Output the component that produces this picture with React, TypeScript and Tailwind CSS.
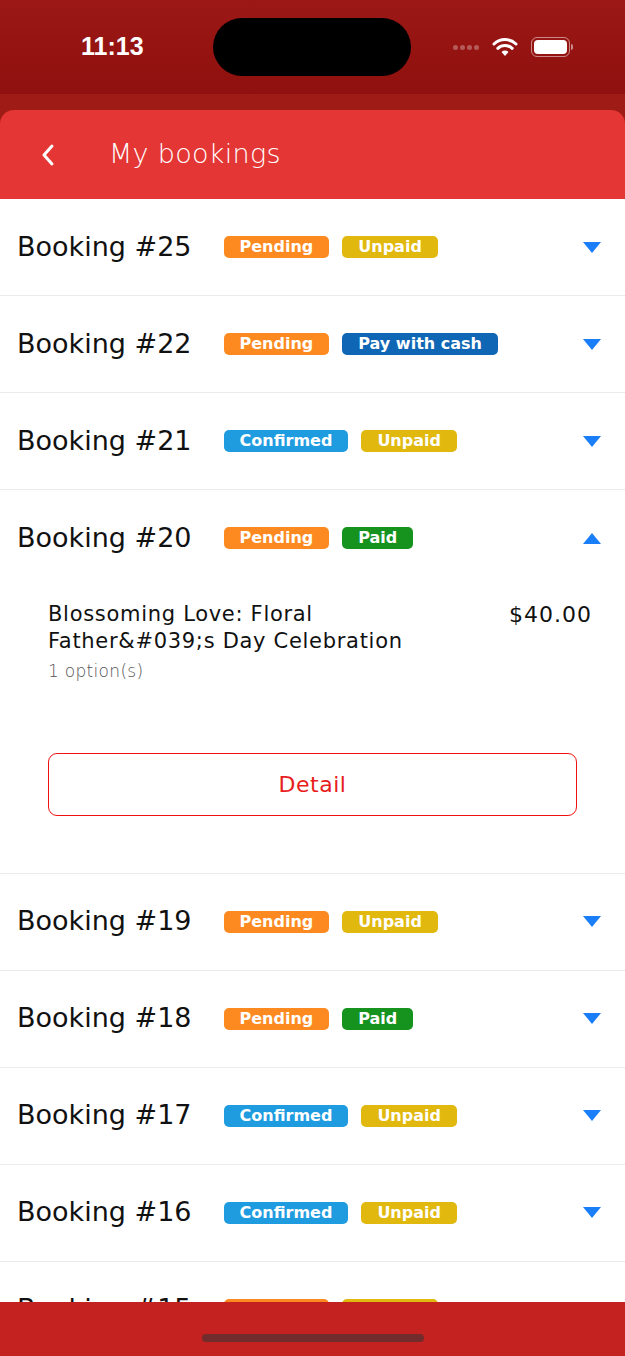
import React from "react";

type Badge = { label: string; color: string };

interface Booking {
  id: number;
  badges: Badge[];
  open?: boolean;
}

const PENDING: Badge = { label: "Pending", color: "bg-[#fd8a21]" };
const CONFIRMED: Badge = { label: "Confirmed", color: "bg-[#1f9be0]" };
const UNPAID: Badge = { label: "Unpaid", color: "bg-[#e1b80e]" };
const PAID: Badge = { label: "Paid", color: "bg-[#16931f]" };
const CASH: Badge = { label: "Pay with cash", color: "bg-[#0f66b5]" };

const bookings: Booking[] = [
  { id: 25, badges: [PENDING, UNPAID] },
  { id: 22, badges: [PENDING, CASH] },
  { id: 21, badges: [CONFIRMED, UNPAID] },
  { id: 20, badges: [PENDING, PAID], open: true },
  { id: 19, badges: [PENDING, UNPAID] },
  { id: 18, badges: [PENDING, PAID] },
  { id: 17, badges: [CONFIRMED, UNPAID] },
  { id: 16, badges: [CONFIRMED, UNPAID] },
  { id: 15, badges: [PENDING, UNPAID] },
];

function StatusBar() {
  return (
    <div className="relative flex h-[94px] shrink-0 items-center bg-gradient-to-b from-[#9b1816] to-[#8f100e]">
      <span className="ml-[81px] font-['Liberation_Sans',sans-serif] text-[25px] font-bold text-white">
        11:13
      </span>
      <div className="absolute left-[213px] top-[18px] h-[58px] w-[198px] rounded-full bg-black" />
      <div className="ml-auto mr-[52px] flex items-center">
        <div className="flex gap-[2px]">
          {[0, 1, 2, 3].map((i) => (
            <span key={i} className="h-[5px] w-[5px] rounded-full bg-white/30" />
          ))}
        </div>
        <svg width="26" height="20" viewBox="0 0 26 20" className="ml-[13px]">
          <path d="M13 19 L9.5 15 A5 5 0 0 1 16.5 15 Z" fill="white" />
          <path d="M5.8 11.3 A10.5 10.5 0 0 1 20.2 11.3" stroke="white" strokeWidth="3" fill="none" strokeLinecap="round" />
          <path d="M2 7 A16 16 0 0 1 24 7" stroke="white" strokeWidth="3" fill="none" strokeLinecap="round" />
        </svg>
        <div className="ml-[13px] flex items-center">
          <div className="flex h-[20px] w-[39px] items-center rounded-[6px] border-[1.5px] border-white/50 p-[2px]">
            <div className="h-full w-full rounded-[4px] bg-white" />
          </div>
          <div className="ml-[1px] h-[6px] w-[2px] rounded-r-full bg-white/50" />
        </div>
      </div>
    </div>
  );
}

function Header() {
  return (
    <div className="shrink-0 bg-[#9e1b16] pt-[16px]">
      <div className="flex h-[89px] items-center rounded-t-[14px] bg-[#e43634] pl-[40px]">
        <svg width="16" height="26" viewBox="0 0 16 26">
          <path d="M12 4 L4 13 L12 22" stroke="white" strokeWidth="3" fill="none" strokeLinecap="round" strokeLinejoin="round" />
        </svg>
        <span className="ml-[53px] text-[27px] font-light tracking-[0.3px] text-white">
          My bookings
        </span>
      </div>
    </div>
  );
}

function Row({ booking }: { booking: Booking }) {
  return (
    <div className="border-b border-[#ebebeb]">
      <div className="flex h-[96px] items-center pl-[17px] pr-[24px]">
        <span className="text-[27px] text-[#111]">Booking #{booking.id}</span>
        <div className="ml-[32px] flex gap-[13px]">
          {booking.badges.map((b) => (
            <span
              key={b.label}
              className={`flex h-[22px] items-center rounded-[5px] px-[16px] text-[16px] font-bold text-white ${b.color}`}
            >
              {b.label}
            </span>
          ))}
        </div>
        <svg width="18" height="11" viewBox="0 0 18 11" className="ml-auto">
          {booking.open ? (
            <path d="M0 11 L9 0 L18 11 Z" fill="#1a7ef9" />
          ) : (
            <path d="M0 0 L18 0 L9 11 Z" fill="#1a7ef9" />
          )}
        </svg>
      </div>
      {booking.open && (
        <div className="px-[48px] pb-[57px]">
          <div className="flex items-start justify-between pt-[15px]">
            <div>
              <div className="w-[400px] text-[21px] leading-[27px] tracking-[0.7px] text-[#111]">
                Blossoming Love: Floral Father&amp;#039;s Day Celebration
              </div>
              <div className="mt-[4px] text-[17px] font-light tracking-[0.3px] text-[#555]">
                1 option(s)
              </div>
            </div>
            <span className="-mr-[15px] text-[22px] leading-[27px] tracking-[1px] text-[#111]">
              $40.00
            </span>
          </div>
          <button className="mt-[68px] flex h-[63px] w-[529px] items-center justify-center rounded-[9px] border border-[#f01010] text-[22px] tracking-[0.5px] text-[#e81c1c]">
            Detail
          </button>
        </div>
      )}
    </div>
  );
}

export default function App() {
  return (
    <div
      className="flex h-[1356px] w-[625px] flex-col overflow-hidden bg-white"
      style={{ fontFamily: '"DejaVu Sans", sans-serif' }}
    >
      <StatusBar />
      <Header />
      <div className="flex-1 overflow-hidden">
        {bookings.map((b) => (
          <Row key={b.id} booking={b} />
        ))}
      </div>
      <div className="flex h-[54px] shrink-0 items-end justify-center bg-[#c42221] pb-[14px]">
        <div className="h-[8px] w-[222px] rounded-full bg-[#732c2c]" />
      </div>
    </div>
  );
}
